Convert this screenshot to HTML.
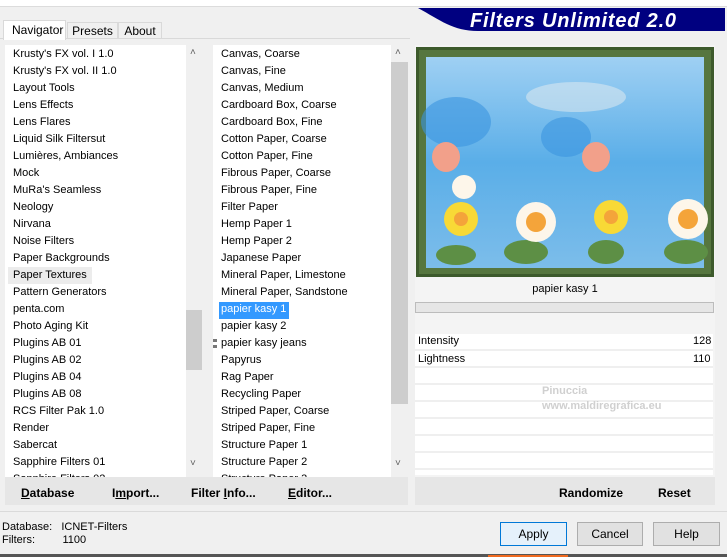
<!DOCTYPE html>
<html><head><meta charset="utf-8">
<style>
*{margin:0;padding:0;box-sizing:border-box}
body{width:727px;height:557px;overflow:hidden;background:#f0f0f0;font-family:"Liberation Sans",Arial,sans-serif;font-size:11px;color:#000;position:relative}
.a{position:absolute}
.it{position:absolute;left:0;height:17px;line-height:17px;white-space:nowrap}
.lst{background:#fff}
.b{font-weight:bold;font-size:12px}
.btn{position:absolute;height:24px;border:1px solid #adadad;background:#e1e1e1;text-align:center;line-height:22px;font-size:12px}
</style></head><body>
<div class="a" style="left:0;top:0;width:727px;height:7px;background:#fff;border-bottom:1px solid #dcdcdc"></div>
<div class="a" style="left:0;top:38px;width:410px;height:1px;background:#d9d9d9"></div>
<div class="a" style="left:3px;top:20px;width:63px;height:20px;background:#fff;border:1px solid #d9d9d9;border-bottom:none;line-height:18px;padding-left:8px;font-size:12px">Navigator</div>
<div class="a" style="left:67px;top:22px;width:51px;height:17px;background:#f0f0f0;border:1px solid #d9d9d9;line-height:16px;text-align:center;font-size:12px">Presets</div>
<div class="a" style="left:118px;top:22px;width:44px;height:17px;background:#f0f0f0;border:1px solid #d9d9d9;line-height:16px;text-align:center;font-size:12px">About</div>
<svg class="a" style="left:418px;top:8px" width="307" height="24"><path d="M22 0H307V23H60C35 23 22 12 0 0Z" fill="#000080"/><text x="52" y="19" font-family="Liberation Sans" font-weight="bold" font-style="italic" font-size="20" letter-spacing="0.8" fill="#fff">Filters Unlimited 2.0</text></svg>
<div class="a lst" style="left:5px;top:45px;width:197px;height:432px;overflow:hidden">
<div class="a" style="left:3px;top:222px;width:84px;height:17px;background:#ececec"></div>
<div class="a" style="left:8px;top:0">
<div class="it" style="top:1px">Krusty's FX vol. I 1.0</div>
<div class="it" style="top:18px">Krusty's FX vol. II 1.0</div>
<div class="it" style="top:35px">Layout Tools</div>
<div class="it" style="top:52px">Lens Effects</div>
<div class="it" style="top:69px">Lens Flares</div>
<div class="it" style="top:86px">Liquid Silk Filtersut</div>
<div class="it" style="top:103px">Lumières, Ambiances</div>
<div class="it" style="top:120px">Mock</div>
<div class="it" style="top:137px">MuRa's Seamless</div>
<div class="it" style="top:154px">Neology</div>
<div class="it" style="top:171px">Nirvana</div>
<div class="it" style="top:188px">Noise Filters</div>
<div class="it" style="top:205px">Paper Backgrounds</div>
<div class="it" style="top:222px">Paper Textures</div>
<div class="it" style="top:239px">Pattern Generators</div>
<div class="it" style="top:256px">penta.com</div>
<div class="it" style="top:273px">Photo Aging Kit</div>
<div class="it" style="top:290px">Plugins AB 01</div>
<div class="it" style="top:307px">Plugins AB 02</div>
<div class="it" style="top:324px">Plugins AB 04</div>
<div class="it" style="top:341px">Plugins AB 08</div>
<div class="it" style="top:358px">RCS Filter Pak 1.0</div>
<div class="it" style="top:375px">Render</div>
<div class="it" style="top:392px">Sabercat</div>
<div class="it" style="top:409px">Sapphire Filters 01</div>
<div class="it" style="top:426px">Sapphire Filters 02</div>
</div>
<div class="a" style="left:181px;top:0;width:16px;height:432px;background:#f0f0f0"></div>
<div class="a" style="left:181px;top:265px;width:16px;height:60px;background:#cdcdcd"></div>
<div class="a" style="left:185px;top:2px;font-size:10px;color:#606060">&#x2C4;</div>
<div class="a" style="left:185px;top:413px;font-size:10px;color:#606060">&#x2C5;</div>
</div>
<div class="a lst" style="left:213px;top:45px;width:195px;height:432px;overflow:hidden">
<div class="a" style="left:6px;top:257px;width:70px;height:17px;background:#3399ff"></div>
<div class="a" style="left:8px;top:0">
<div class="it" style="top:1px">Canvas, Coarse</div>
<div class="it" style="top:18px">Canvas, Fine</div>
<div class="it" style="top:35px">Canvas, Medium</div>
<div class="it" style="top:52px">Cardboard Box, Coarse</div>
<div class="it" style="top:69px">Cardboard Box, Fine</div>
<div class="it" style="top:86px">Cotton Paper, Coarse</div>
<div class="it" style="top:103px">Cotton Paper, Fine</div>
<div class="it" style="top:120px">Fibrous Paper, Coarse</div>
<div class="it" style="top:137px">Fibrous Paper, Fine</div>
<div class="it" style="top:154px">Filter Paper</div>
<div class="it" style="top:171px">Hemp Paper 1</div>
<div class="it" style="top:188px">Hemp Paper 2</div>
<div class="it" style="top:205px">Japanese Paper</div>
<div class="it" style="top:222px">Mineral Paper, Limestone</div>
<div class="it" style="top:239px">Mineral Paper, Sandstone</div>
<div class="it" style="top:256px;color:#fff">papier kasy 1</div>
<div class="it" style="top:273px">papier kasy 2</div>
<div class="it" style="top:290px">papier kasy jeans</div>
<div class="it" style="top:307px">Papyrus</div>
<div class="it" style="top:324px">Rag Paper</div>
<div class="it" style="top:341px">Recycling Paper</div>
<div class="it" style="top:358px">Striped Paper, Coarse</div>
<div class="it" style="top:375px">Striped Paper, Fine</div>
<div class="it" style="top:392px">Structure Paper 1</div>
<div class="it" style="top:409px">Structure Paper 2</div>
<div class="it" style="top:426px">Structure Paper 3</div>
</div>
<div class="a" style="left:178px;top:0;width:17px;height:432px;background:#f0f0f0"></div>
<div class="a" style="left:178px;top:17px;width:17px;height:342px;background:#cdcdcd"></div>
<div class="a" style="left:182px;top:2px;font-size:10px;color:#606060">&#x2C4;</div>
<div class="a" style="left:182px;top:413px;font-size:10px;color:#606060">&#x2C5;</div>
</div>
<div class="a" style="left:213px;top:339px;width:4px;height:9px;border-top:3px solid #777;border-bottom:3px solid #777"></div>
<div class="a" style="left:415px;top:45px;width:300px;height:432px;background:#f4f4f4"></div>
<svg class="a" style="left:416px;top:47px" width="298" height="230">
<rect width="298" height="230" fill="#3d5a2c"/>
<rect x="3" y="3" width="292" height="224" fill="#56763f"/>
<defs><linearGradient id="s" x1="0" y1="0" x2="0" y2="1"><stop offset="0" stop-color="#9fd0f3"/><stop offset=".5" stop-color="#5aaee8"/><stop offset="1" stop-color="#7cbdea"/></linearGradient></defs>
<rect x="10" y="10" width="278" height="211" fill="url(#s)"/>
<ellipse cx="40" cy="75" rx="35" ry="25" fill="#3a95e0" opacity=".6"/>
<ellipse cx="150" cy="90" rx="25" ry="20" fill="#3a95e0" opacity=".6"/>
<ellipse cx="160" cy="50" rx="50" ry="15" fill="#e8eef0" opacity=".5"/>
<g fill="#5d8f45"><ellipse cx="110" cy="205" rx="22" ry="12"/><ellipse cx="270" cy="205" rx="22" ry="12"/><ellipse cx="190" cy="205" rx="18" ry="12"/><ellipse cx="40" cy="208" rx="20" ry="10"/></g>
<g fill="#fdf6ea"><circle cx="120" cy="175" r="20"/><circle cx="272" cy="172" r="20"/><circle cx="48" cy="140" r="12"/></g>
<g fill="#f8d936"><circle cx="45" cy="172" r="17"/><circle cx="195" cy="170" r="17"/></g>
<g fill="#f4a43a"><circle cx="120" cy="175" r="10"/><circle cx="272" cy="172" r="10"/><circle cx="45" cy="172" r="7"/><circle cx="195" cy="170" r="7"/></g>
<g fill="#f2a08a"><ellipse cx="30" cy="110" rx="14" ry="15"/><ellipse cx="180" cy="110" rx="14" ry="15"/></g>
</svg>
<div class="a" style="left:415px;top:283px;width:300px;text-align:center;font-size:11px">papier kasy 1</div>
<div class="a" style="left:415px;top:302px;width:299px;height:11px;background:#e6e6e6;border:1px solid #bcbcbc"></div>
<div class="a" style="left:415px;top:334px;width:298px;height:141px;background:repeating-linear-gradient(#fff 0,#fff 15px,#efefef 15px,#efefef 17px)"></div>
<div class="a" style="left:418px;top:335px;font-size:11px">Intensity</div>
<div class="a" style="left:693px;top:335px;font-size:11px">128</div>
<div class="a" style="left:418px;top:353px;font-size:11px">Lightness</div>
<div class="a" style="left:693px;top:353px;font-size:11px">110</div>
<div class="a" style="left:542px;top:385px;font-size:11px;color:#d0d0d0;font-weight:bold">Pinuccia</div>
<div class="a" style="left:542px;top:400px;font-size:11px;color:#d0d0d0;font-weight:bold">www.maldiregrafica.eu</div>
<div class="a" style="left:5px;top:477px;width:403px;height:28px;background:#e6e6e6"></div>
<div class="a" style="left:415px;top:477px;width:300px;height:28px;background:#e6e6e6"></div>
<div class="a b" style="left:21px;top:486px"><u>D</u>atabase</div>
<div class="a b" style="left:112px;top:486px">I<u>m</u>port...</div>
<div class="a b" style="left:191px;top:486px">Filter <u>I</u>nfo...</div>
<div class="a b" style="left:288px;top:486px"><u>E</u>ditor...</div>
<div class="a b" style="left:559px;top:486px">Randomize</div>
<div class="a b" style="left:658px;top:486px">Reset</div>
<div class="a" style="left:0;top:511px;width:727px;height:1px;background:#dadada"></div>
<div class="a" style="left:2px;top:521px;font-size:11px">Database:&nbsp;&nbsp; ICNET-Filters</div>
<div class="a" style="left:2px;top:534px;font-size:11px">Filters:&nbsp;&nbsp;&nbsp;&nbsp;&nbsp;&nbsp;&nbsp;&nbsp; 1100</div>
<div class="btn" style="left:500px;top:522px;width:67px;background:#e5f1fb;border-color:#0078d7">Apply</div>
<div class="btn" style="left:577px;top:522px;width:66px">Cancel</div>
<div class="btn" style="left:653px;top:522px;width:67px">Help</div>
<div class="a" style="left:0;top:554px;width:727px;height:3px;background:#555"></div>
<div class="a" style="left:488px;top:555px;width:80px;height:2px;background:#f06a20"></div>
</body></html>
